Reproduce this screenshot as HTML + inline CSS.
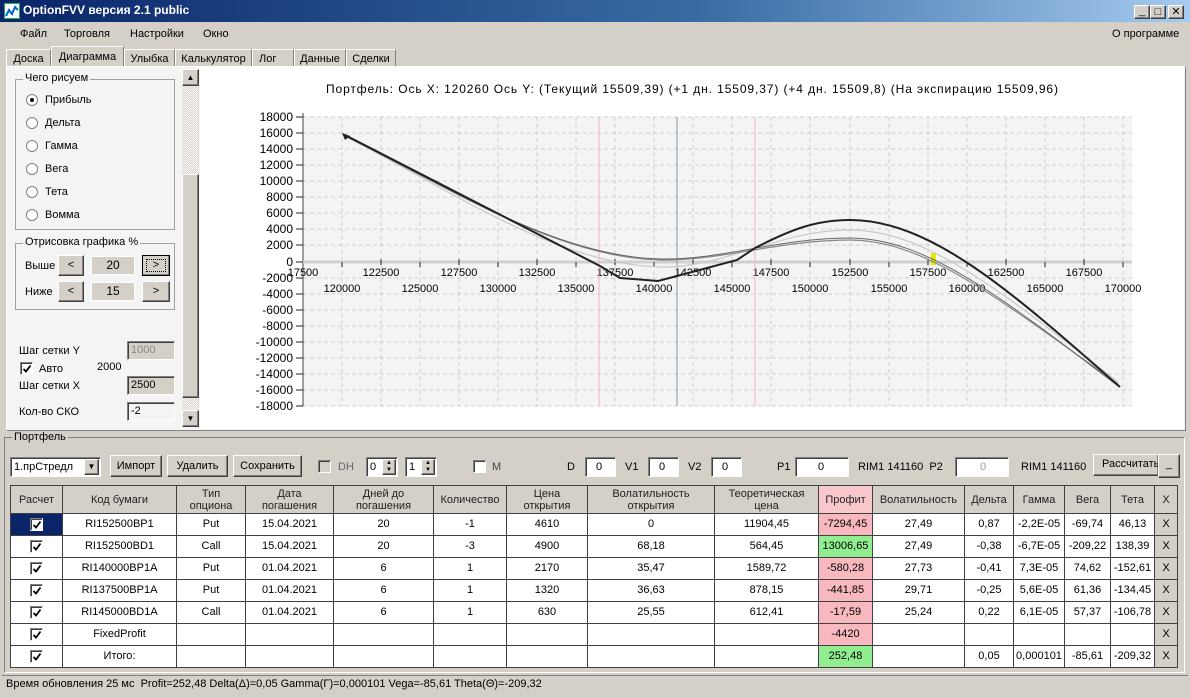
<!DOCTYPE html>
<html><head><meta charset="utf-8">
<style>
*{box-sizing:border-box;margin:0;padding:0}
body{width:1190px;height:698px;overflow:hidden;background:#d4d0c8;font-family:"Liberation Sans","DejaVu Sans",sans-serif;font-size:11px;color:#000;position:relative}
.a{position:absolute}
.btn{position:absolute;background:#d4d0c8;border:1px solid;border-color:#fff #404040 #404040 #fff;box-shadow:inset -1px -1px 0 #808080;text-align:center;font-size:11px}
.inp{position:absolute;background:#fff;border:1px solid;border-color:#808080 #fff #fff #808080;box-shadow:inset 1px 1px 0 #404040;font-size:11px;padding-left:3px}
.cb{position:absolute;width:13px;height:13px;background:#fff;border:1px solid;border-color:#808080 #fff #fff #808080;box-shadow:inset 1px 1px 0 #404040}
.cb svg{position:absolute;left:1px;top:1px}
.tc{display:block;position:relative;margin:0 auto;width:13px;height:13px;background:#fff;border:1px solid;border-color:#808080 #fff #fff #808080;box-shadow:inset 1px 1px 0 #404040}
.tc svg{position:absolute;left:1px;top:1px}
.rad{position:absolute;width:12px;height:12px;border-radius:50%;background:#fff;border:1px solid #808080}
table{border-collapse:collapse;position:absolute;left:10px;top:485px;table-layout:fixed;background:#fff}
td{border:1px solid #404040;text-align:center;font-size:11px;white-space:nowrap;overflow:hidden;height:22px;padding:0;line-height:13px;vertical-align:middle}
tr{height:22px}
tr.h{height:28px}
tr.h td{background:#d4d0c8;height:28px;line-height:12px;color:#222}
.tab{position:absolute;top:49px;height:18px;background:#d4d0c8;border:1px solid;border-color:#fff #808080 transparent #fff;font-size:11px;padding:3px 4px 0;text-align:center}
</style></head><body>
<div class="a" style="left:0;top:0;width:1190px;height:22px;background:linear-gradient(90deg,#0a246a,#3a6ea5 60%,#a6caf0)"></div>
<div class="a" style="left:4px;top:3px;width:16px;height:16px;background:#fff;border:1px solid #2a5"><svg width="14" height="14"><path d="M1 12 L4 6 L7 10 L10 3 L13 6" stroke="#06c" stroke-width="2" fill="none"/></svg></div>
<div class="a" style="left:23px;top:3px;color:#fff;font-weight:bold;font-size:12px">OptionFVV версия 2.1 public</div>
<div class="btn" style="left:1134px;top:5px;width:16px;height:14px;line-height:10px">_</div>
<div class="btn" style="left:1150px;top:5px;width:16px;height:14px;line-height:12px">□</div>
<div class="btn" style="left:1168px;top:5px;width:16px;height:14px;line-height:12px;font-weight:bold">✕</div>
<div class="a" style="left:20px;top:28px">Файл</div>
<div class="a" style="left:64px;top:28px">Торговля</div>
<div class="a" style="left:130px;top:28px">Настройки</div>
<div class="a" style="left:203px;top:28px">Окно</div>
<div class="a" style="left:1112px;top:28px">О программе</div>
<div class="tab" style="left:6px;width:45px">Доска</div>
<div class="tab" style="left:51px;top:46px;height:21px;width:73px;padding-top:4px">Диаграмма</div>
<div class="tab" style="left:124px;width:51px">Улыбка</div>
<div class="tab" style="left:175px;width:77px">Калькулятор</div>
<div class="tab" style="left:252px;width:42px;text-align:left;padding-left:6px">Лог</div>
<div class="tab" style="left:294px;width:52px">Данные</div>
<div class="tab" style="left:346px;width:50px">Сделки</div>
<div class="a" style="left:6px;top:66px;width:1180px;height:365px;background:#f4f4f4;border:1px solid;border-color:#fff #808080 #808080 #fff"></div>
<div class="a" style="left:15px;top:79px;width:160px;height:151px;border:1px solid #a0a0a0"></div>
<div class="a" style="left:23px;top:72px;background:#f4f4f4;padding:0 2px">Чего рисуем</div>
<div class="rad" style="left:26px;top:94px"><div class="a" style="left:3px;top:3px;width:4px;height:4px;background:#000;border-radius:50%"></div></div><div class="a" style="left:45px;top:94px">Прибыль</div>
<div class="rad" style="left:26px;top:117px"></div><div class="a" style="left:45px;top:117px">Дельта</div>
<div class="rad" style="left:26px;top:140px"></div><div class="a" style="left:45px;top:140px">Гамма</div>
<div class="rad" style="left:26px;top:163px"></div><div class="a" style="left:45px;top:163px">Вега</div>
<div class="rad" style="left:26px;top:186px"></div><div class="a" style="left:45px;top:186px">Тета</div>
<div class="rad" style="left:26px;top:209px"></div><div class="a" style="left:45px;top:209px">Вомма</div>
<div class="a" style="left:15px;top:243px;width:160px;height:67px;border:1px solid #a0a0a0"></div>
<div class="a" style="left:23px;top:236px;background:#f4f4f4;padding:0 2px">Отрисовка графика %</div>
<div class="a" style="left:25px;top:260px">Выше</div>
<div class="btn" style="left:58px;top:255px;width:26px;height:21px;line-height:18px">&lt;</div>
<div class="a" style="left:91px;top:256px;width:44px;height:19px;background:#d4d0c8;border:1px solid #fff;text-align:center;line-height:17px;font-size:12px">20</div>
<div class="btn" style="left:142px;top:255px;width:28px;height:21px;line-height:18px;border:1px solid #000;outline:1px dotted #000;outline-offset:-5px">&gt;</div>
<div class="a" style="left:25px;top:286px">Ниже</div>
<div class="btn" style="left:58px;top:281px;width:26px;height:21px;line-height:18px">&lt;</div>
<div class="a" style="left:91px;top:282px;width:44px;height:19px;background:#d4d0c8;border:1px solid #fff;text-align:center;line-height:17px;font-size:12px">15</div>
<div class="btn" style="left:142px;top:281px;width:28px;height:21px;line-height:18px">&gt;</div>
<div class="a" style="left:19px;top:345px">Шаг сетки Y</div>
<div class="inp" style="left:127px;top:341px;width:48px;height:19px;background:#d4d0c8;color:#888;line-height:17px">1000</div>
<div class="cb" style="left:20px;top:362px"><svg width="10" height="10"><path d="M1.5 5 L4 7.5 L8.5 1.5" stroke="#000" stroke-width="1.8" fill="none"/></svg></div><div class="a" style="left:39px;top:363px">Авто</div>
<div class="a" style="left:97px;top:361px">2000</div>
<div class="a" style="left:19px;top:380px">Шаг сетки X</div>
<div class="inp" style="left:127px;top:376px;width:48px;height:19px;background:#d4d0c8;line-height:17px">2500</div>
<div class="a" style="left:19px;top:406px">Кол-во СКО</div>
<div class="inp" style="left:127px;top:402px;width:48px;height:19px;background:#f4f4f4;line-height:17px">-2</div>
<div class="a" style="left:182px;top:69px;width:17px;height:358px;background:repeating-conic-gradient(#fff 0 25%,#d4d0c8 0 50%) 0 0/2px 2px"></div>
<div class="btn" style="left:182px;top:69px;width:17px;height:17px;font-size:8px;line-height:15px">▲</div>
<div class="btn" style="left:182px;top:174px;width:17px;height:224px"></div>
<div class="btn" style="left:182px;top:410px;width:17px;height:17px;font-size:8px;line-height:15px">▼</div>
<svg class="a" style="left:200px;top:67px" width="984" height="362" viewBox="200 67 984 362" font-family="Liberation Sans, sans-serif" font-size="11">
<rect x="200" y="67" width="984" height="362" fill="#fff"/>
<rect x="303" y="117" width="829" height="289" fill="#f4f4f4"/>
<text x="326" y="93" font-size="12" fill="#000" textLength="732" lengthAdjust="spacing">Портфель:  Ось X:  120260  Ось Y:   (Текущий  15509,39)   (+1 дн.  15509,37)   (+4 дн.  15509,8)   (На экспирацию  15509,96)</text>
<g stroke="#cfcfcf" stroke-dasharray="4,3">
<path d="M303 117H1132M303 133H1132M303 149H1132M303 165H1132M303 181H1132M303 197H1132M303 213H1132M303 229H1132M303 245H1132M303 278H1132M303 294H1132M303 310H1132M303 326H1132M303 342H1132M303 358H1132M303 374H1132M303 390H1132M303 406H1132"/>
<path d="M342 117V406M381 117V406M420 117V406M459 117V406M498 117V406M537 117V406M576 117V406M615 117V406M654 117V406M693 117V406M732 117V406M771 117V406M810 117V406M850 117V406M889 117V406M928 117V406M967 117V406M1006 117V406M1045 117V406M1084 117V406M1123 117V406"/>
</g>
<path d="M303 113V406" stroke="#444"/>
<path d="M303 262H1132" stroke="#d0d0d0" stroke-width="3"/>
<g stroke="#222"><path d="M296 117H303M296 133H303M296 149H303M296 165H303M296 181H303M296 197H303M296 213H303M296 229H303M296 245H303M296 262H303M296 278H303M296 294H303M296 310H303M296 326H303M296 342H303M296 358H303M296 374H303M296 390H303M296 406H303"/>
<path d="M381 259V265M459 259V265M537 259V265M615 259V265M693 259V265M771 259V265M850 259V265M928 259V265M1006 259V265M1084 259V265M342 262V267M420 262V267M498 262V267M576 262V267M654 262V267M732 262V267M810 262V267M889 262V267M967 262V267M1045 262V267M1123 262V267"/></g>
<g text-anchor="end" fill="#000" font-size="12"><text x="293" y="121">18000</text><text x="293" y="137">16000</text><text x="293" y="153">14000</text><text x="293" y="169">12000</text><text x="293" y="185">10000</text><text x="293" y="201">8000</text><text x="293" y="217">6000</text><text x="293" y="233">4000</text><text x="293" y="249">2000</text><text x="293" y="266">0</text><text x="293" y="282">-2000</text><text x="293" y="298">-4000</text><text x="293" y="314">-6000</text><text x="293" y="330">-8000</text><text x="293" y="346">-10000</text><text x="293" y="362">-12000</text><text x="293" y="378">-14000</text><text x="293" y="394">-16000</text><text x="293" y="410">-18000</text></g>
<g text-anchor="middle" fill="#000"><text x="303" y="276">17500</text><text x="381" y="276">122500</text><text x="459" y="276">127500</text><text x="537" y="276">132500</text><text x="615" y="276">137500</text><text x="693" y="276">142500</text><text x="771" y="276">147500</text><text x="850" y="276">152500</text><text x="928" y="276">157500</text><text x="1006" y="276">162500</text><text x="1084" y="276">167500</text>
<text x="342" y="292">120000</text><text x="420" y="292">125000</text><text x="498" y="292">130000</text><text x="576" y="292">135000</text><text x="654" y="292">140000</text><text x="732" y="292">145000</text><text x="810" y="292">150000</text><text x="889" y="292">155000</text><text x="967" y="292">160000</text><text x="1045" y="292">165000</text><text x="1123" y="292">170000</text></g>
<path d="M599 117V406M755 117V406" stroke="#f4b8c0"/>
<path d="M677 117V406" stroke="#8a9aaa"/>
<rect x="931" y="253" width="5" height="12" fill="#e8e800"/>
<g fill="none">
<path d="M345 136 C450 190 560 267 665 267 C725 267 780 230 850 230 C925 230 1000 290 1118 382" stroke="#c8c8c8" stroke-width="1.2"/>
<path d="M345 136 C450 188 560 260 665 260 C725 260 780 240 850 240 C925 240 1000 300 1118 384" stroke="#888" stroke-width="1.2"/>
<path d="M345 136 C450 188 560 259 665 259 C725 259 780 238 850 238 C925 238 1000 296 1118 386" stroke="#666" stroke-width="1"/>
<path d="M345 135 L600 266 L620 278 L658 281 L677 276 L737 260 L755 248 C790 230 815 220 850 220 C930 220 1010 290 1120 387" stroke="#222" stroke-width="2"/>
</g>
<path d="M342 133 L350 136 L345 140Z" fill="#222"/>
</svg>
<div class="a" style="left:4px;top:437px;width:1181px;height:236px;border:1px solid;border-color:#808080 #fff #fff #808080"></div>
<div class="a" style="left:12px;top:431px;background:#d4d0c8;padding:0 2px">Портфель</div>
<div class="inp" style="left:10px;top:457px;width:91px;height:20px;line-height:18px;background:#fff">1.прСтредл</div>
<div class="btn" style="left:84px;top:459px;width:15px;height:16px;font-size:8px;line-height:14px">▼</div>
<div class="btn" style="left:110px;top:455px;width:52px;height:22px;line-height:20px">Импорт</div>
<div class="btn" style="left:167px;top:455px;width:61px;height:22px;line-height:20px">Удалить</div>
<div class="btn" style="left:233px;top:455px;width:69px;height:22px;line-height:20px">Сохранить</div>
<div class="cb" style="left:318px;top:460px;background:#d4d0c8"></div><div class="a" style="left:338px;top:461px;color:#666">DH</div>
<div class="inp" style="left:366px;top:457px;width:32px;height:20px;line-height:18px">0</div><div class="btn" style="left:382px;top:459px;width:14px;height:16px;font-size:6px;line-height:7px">▲<br>▼</div>
<div class="inp" style="left:405px;top:457px;width:32px;height:20px;line-height:18px">1</div><div class="btn" style="left:421px;top:459px;width:14px;height:16px;font-size:6px;line-height:7px">▲<br>▼</div>
<div class="cb" style="left:473px;top:460px;background:#fff"></div><div class="a" style="left:492px;top:461px;color:#444">M</div>
<div class="a" style="left:567px;top:461px">D</div><div class="inp" style="left:585px;top:457px;width:31px;height:20px;line-height:18px;padding-left:10px">0</div>
<div class="a" style="left:625px;top:461px">V1</div><div class="inp" style="left:648px;top:457px;width:31px;height:20px;line-height:18px;padding-left:10px">0</div>
<div class="a" style="left:688px;top:461px">V2</div><div class="inp" style="left:711px;top:457px;width:31px;height:20px;line-height:18px;padding-left:10px">0</div>
<div class="a" style="left:777px;top:461px">P1</div><div class="inp" style="left:795px;top:457px;width:54px;height:20px;line-height:18px;padding-left:22px">0</div>
<div class="a" style="left:858px;top:461px">RIM1 141160 &nbsp;P2</div><div class="inp" style="left:955px;top:457px;width:54px;height:20px;line-height:18px;padding-left:24px;color:#999">0</div>
<div class="a" style="left:1021px;top:461px">RIM1 141160</div>
<div class="btn" style="left:1093px;top:454px;width:66px;height:22px;line-height:18px;text-align:left;padding-left:8px;overflow:hidden">Рассчитать</div>
<div class="btn" style="left:1158px;top:454px;width:22px;height:24px;line-height:18px">_</div>
<table>
<colgroup><col style="width:52px"><col style="width:114px"><col style="width:69px"><col style="width:88px"><col style="width:100px"><col style="width:73px"><col style="width:81px"><col style="width:127px"><col style="width:104px"><col style="width:54px"><col style="width:92px"><col style="width:49px"><col style="width:51px"><col style="width:46px"><col style="width:44px"><col style="width:23px"></colgroup>
<tr class="h"><td>Расчет</td><td>Код бумаги</td><td>Тип<br>опциона</td><td>Дата<br>погашения</td><td>Дней до<br>погашения</td><td>Количество</td><td>Цена<br>открытия</td><td>Волатильность<br>открытия</td><td>Теоретическая<br>цена</td><td style="background:#f8c8cc">Профит</td><td>Волатильность</td><td>Дельта</td><td>Гамма</td><td>Вега</td><td>Тета</td><td>X</td></tr>
<tr><td style="background:#0a246a"><span class="tc"><svg width="10" height="10"><path d="M1.5 5 L4 7.5 L8.5 1.5" stroke="#000" stroke-width="1.8" fill="none"/></svg></span></td><td>RI152500BP1</td><td>Put</td><td>15.04.2021</td><td>20</td><td>-1</td><td>4610</td><td>0</td><td>11904,45</td><td style="background:#f8b8c0">-7294,45</td><td>27,49</td><td>0,87</td><td>-2,2E-05</td><td>-69,74</td><td>46,13</td><td style="background:#d4d0c8">X</td></tr>
<tr><td><span class="tc"><svg width="10" height="10"><path d="M1.5 5 L4 7.5 L8.5 1.5" stroke="#000" stroke-width="1.8" fill="none"/></svg></span></td><td>RI152500BD1</td><td>Call</td><td>15.04.2021</td><td>20</td><td>-3</td><td>4900</td><td>68,18</td><td>564,45</td><td style="background:#90ee90">13006,65</td><td>27,49</td><td>-0,38</td><td>-6,7E-05</td><td>-209,22</td><td>138,39</td><td style="background:#d4d0c8">X</td></tr>
<tr><td><span class="tc"><svg width="10" height="10"><path d="M1.5 5 L4 7.5 L8.5 1.5" stroke="#000" stroke-width="1.8" fill="none"/></svg></span></td><td>RI140000BP1A</td><td>Put</td><td>01.04.2021</td><td>6</td><td>1</td><td>2170</td><td>35,47</td><td>1589,72</td><td style="background:#f8b8c0">-580,28</td><td>27,73</td><td>-0,41</td><td>7,3E-05</td><td>74,62</td><td>-152,61</td><td style="background:#d4d0c8">X</td></tr>
<tr><td><span class="tc"><svg width="10" height="10"><path d="M1.5 5 L4 7.5 L8.5 1.5" stroke="#000" stroke-width="1.8" fill="none"/></svg></span></td><td>RI137500BP1A</td><td>Put</td><td>01.04.2021</td><td>6</td><td>1</td><td>1320</td><td>36,63</td><td>878,15</td><td style="background:#f8b8c0">-441,85</td><td>29,71</td><td>-0,25</td><td>5,6E-05</td><td>61,36</td><td>-134,45</td><td style="background:#d4d0c8">X</td></tr>
<tr><td><span class="tc"><svg width="10" height="10"><path d="M1.5 5 L4 7.5 L8.5 1.5" stroke="#000" stroke-width="1.8" fill="none"/></svg></span></td><td>RI145000BD1A</td><td>Call</td><td>01.04.2021</td><td>6</td><td>1</td><td>630</td><td>25,55</td><td>612,41</td><td style="background:#f8b8c0">-17,59</td><td>25,24</td><td>0,22</td><td>6,1E-05</td><td>57,37</td><td>-106,78</td><td style="background:#d4d0c8">X</td></tr>
<tr style="height:20px"><td style="height:20px"><span class="tc"><svg width="10" height="10"><path d="M1.5 5 L4 7.5 L8.5 1.5" stroke="#000" stroke-width="1.8" fill="none"/></svg></span></td><td>FixedProfit</td><td></td><td></td><td></td><td></td><td></td><td></td><td></td><td style="background:#f8b8c0">-4420</td><td></td><td></td><td></td><td></td><td></td><td style="background:#d4d0c8">X</td></tr>
<tr style="height:21px"><td style="height:21px"><span class="tc"><svg width="10" height="10"><path d="M1.5 5 L4 7.5 L8.5 1.5" stroke="#000" stroke-width="1.8" fill="none"/></svg></span></td><td>Итого:</td><td></td><td></td><td></td><td></td><td></td><td></td><td></td><td style="background:#90ee90">252,48</td><td></td><td>0,05</td><td>0,000101</td><td>-85,61</td><td>-209,32</td><td style="background:#d4d0c8">X</td></tr>
</table>
<div class="a" style="left:2px;top:675px;width:1186px;height:21px;border-top:1px solid #808080;background:#d4d0c8"></div>
<div class="a" style="left:6px;top:678px">Время обновления 25 мс &nbsp;Profit=252,48 Delta(Δ)=0,05 Gamma(Γ)=0,000101 Vega=-85,61 Theta(Θ)=-209,32</div>
</body></html>
